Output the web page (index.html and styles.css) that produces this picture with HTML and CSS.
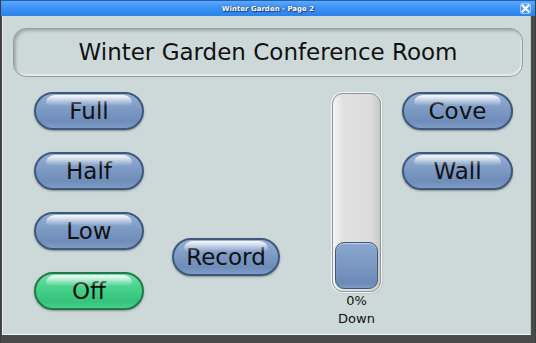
FILE: index.html
```html
<!DOCTYPE html>
<html>
<head>
<meta charset="utf-8">
<link rel="stylesheet" href="styles.css">
</head>
<body>
<div class="window">
  <div class="titlebar">
    <span class="title">Winter Garden - Page 2</span>
    <span class="close"><svg width="9" height="9" viewBox="0 0 9 9"><path d="M1.5 1.5 L7.5 7.5 M7.5 1.5 L1.5 7.5" stroke="#fff" stroke-width="2" stroke-linecap="square"/></svg></span>
  </div>
  <div class="content">
    <div class="header">Winter Garden Conference Room</div>
    <div class="main">
      <div class="col col-left">
        <div class="btn">Full</div>
        <div class="btn">Half</div>
        <div class="btn">Low</div>
        <div class="btn btn-green">Off</div>
      </div>
      <div class="col col-mid">
        <div class="btn btn-record">Record</div>
      </div>
      <div class="col col-slider">
        <div class="track"><div class="thumb"></div></div>
        <div class="slabel">0%</div>
        <div class="slabel">Down</div>
      </div>
      <div class="col col-right">
        <div class="btn btn-wide">Cove</div>
        <div class="btn btn-wide">Wall</div>
      </div>
    </div>
  </div>
</div>
</body>
</html>
```
FILE: styles.css
```css
html, body {
  margin: 0;
  padding: 0;
  width: 536px;
  height: 343px;
  overflow: hidden;
  background: #4a4a4a;
  font-family: "DejaVu Sans", sans-serif;
}
.window {
  width: 536px;
  height: 343px;
  display: flex;
  flex-direction: column;
  box-sizing: border-box;
  border-left: 1px solid #3c3c3c;
  border-right: 1px solid #3c3c3c;
}
.titlebar {
  height: 16px;
  flex: none;
  background: linear-gradient(#5aa8ff, #3a90f4 50%, #2b82ec);
  border-top: 1px solid #1f5fae;
  box-sizing: border-box;
  display: flex;
  align-items: center;
  justify-content: center;
  position: relative;
}
.title {
  color: #fff;
  font-size: 7px;
  font-weight: bold;
  font-family: "DejaVu Sans", sans-serif;
  text-shadow: 0 0 2px #1a3d70, 1px 1px 1px #1a3d70;
  letter-spacing: 0;
}
.close {
  position: absolute;
  right: 4px;
  top: 2px;
  width: 11px;
  height: 11px;
  box-sizing: border-box;
  border: 1px solid #9cc8ff;
  border-radius: 2px;
  background: linear-gradient(#5eaaff, #3a8cf0);
  display: flex;
  align-items: center;
  justify-content: center;
}
.close svg { display: block; }
.content {
  flex: 1;
  background: #ccd9d8;
  margin: 0 4px 8px 1px;
  border-left: 1px solid #e6eeee;
  border-right: 1px solid #b8c4c4;
  border-bottom: 1px solid #f2f6f6;
  padding: 12px 7px 0 10px;
  display: flex;
  flex-direction: column;
}
.header {
  height: 49px;
  box-sizing: border-box;
  border: 1.5px solid #949e9e;
  border-radius: 13px;
  background: #cdd9d8;
  box-shadow: inset 2px 2px 3px rgba(0,0,0,0.22), inset -1px -2px 2px rgba(255,255,255,0.55);
  display: flex;
  align-items: center;
  justify-content: center;
  font-size: 23px;
  color: #111;
  padding-bottom: 1px;
}
.main {
  display: flex;
  padding: 15px 0 0 21px;
}
.col {
  display: flex;
  flex-direction: column;
}
.col-left {
  width: 110px;
  gap: 22px;
}
.col-mid {
  margin-left: 28px;
  width: 108px;
  padding-top: 146px;
}
.col-slider {
  margin-left: 52px;
  width: 49px;
  padding-top: 1px;
  align-items: center;
}
.col-right {
  margin-left: 21px;
  width: 111px;
  gap: 22px;
}
.btn {
  position: relative;
  height: 38px;
  box-sizing: border-box;
  border-radius: 19px;
  border: 2px solid #3d587c;
  background: linear-gradient(#97b0d4, #7c9ac4 45%, #6f8db9 80%, #7e9cc6);
  box-shadow: 0 1px 2px rgba(0,0,0,0.35);
  display: flex;
  align-items: center;
  justify-content: center;
  font-size: 23px;
  color: #111;
  padding-bottom: 1px;
}
.btn::before {
  content: "";
  position: absolute;
  left: 10px;
  right: 10px;
  top: 1px;
  height: 11px;
  border-radius: 14px 14px 8px 8px / 10px 10px 6px 6px;
  background: linear-gradient(rgba(255,255,255,0.95), rgba(255,255,255,0.35) 60%, rgba(255,255,255,0));
}
.btn-green {
  border-color: #1c7a48;
  background: linear-gradient(#6fe0a6, #45d08a 45%, #35c27a 80%, #48d08e);
}
.track {
  width: 49px;
  height: 199px;
  box-sizing: border-box;
  border-radius: 11px;
  border: 1px solid #8e9494;
  box-shadow: 0 0 0 1px #f4f6f6, 1px 1px 2px rgba(0,0,0,0.2);
  background: linear-gradient(90deg, #f4f4f4, #e2e2e2 20%, #dcdcdc 80%, #c8c8c8);
  display: flex;
  flex-direction: column;
  justify-content: flex-end;
  padding: 0 2px 2px 2px;
}
.thumb {
  height: 47px;
  box-sizing: border-box;
  border-radius: 9px;
  border: 1.5px solid #3d587c;
  background: linear-gradient(#8aa6cc, #7a98c3 50%, #6c8ab6 90%, #7e9bc4);
  box-shadow: inset 0 1px 1px rgba(255,255,255,0.5);
}
.slabel {
  font-size: 13px;
  line-height: 18px;
  color: #111;
  text-align: center;
}
```
